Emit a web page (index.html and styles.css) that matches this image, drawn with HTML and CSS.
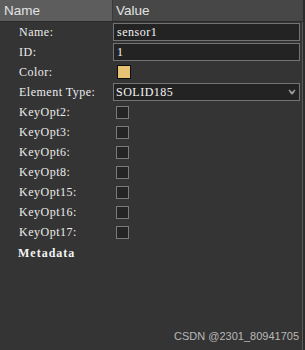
FILE: index.html
```html
<!DOCTYPE html>
<html>
<head>
<meta charset="utf-8">
<link rel="stylesheet" href="styles.css">
</head>
<body>
<div class="panel">
  <div class="header">
    <div class="hname">Name</div>
    <div class="hsep"></div>
    <div class="hvalue">Value</div>
  </div>
  <div class="rows">
    <div class="label">Name:</div>
    <div class="value"><div class="input">sensor1</div></div>
    <div class="label">ID:</div>
    <div class="value"><div class="input">1</div></div>
    <div class="label">Color:</div>
    <div class="value"><div class="swatch"></div></div>
    <div class="label">Element Type:</div>
    <div class="value"><div class="input select">SOLID185<svg class="chev" width="8" height="6" viewBox="0 0 8 6"><polyline points="1,1 4,4 7,1" fill="none" stroke="#9a9a9a" stroke-width="1.6"/><polyline points="2,3 4,5 6,3" fill="none" stroke="#9a9a9a" stroke-width="1.2"/></svg></div></div>
    <div class="label">KeyOpt2:</div>
    <div class="value"><div class="check"></div></div>
    <div class="label">KeyOpt3:</div>
    <div class="value"><div class="check"></div></div>
    <div class="label">KeyOpt6:</div>
    <div class="value"><div class="check"></div></div>
    <div class="label">KeyOpt8:</div>
    <div class="value"><div class="check"></div></div>
    <div class="label">KeyOpt15:</div>
    <div class="value"><div class="check"></div></div>
    <div class="label">KeyOpt16:</div>
    <div class="value"><div class="check"></div></div>
    <div class="label">KeyOpt17:</div>
    <div class="value"><div class="check"></div></div>
    <div class="section">Metadata</div>
  </div>
  <div class="watermark">CSDN @2301_80941705</div>
</div>
</body>
</html>
```
FILE: styles.css
```css
html, body {
  margin: 0;
  padding: 0;
  background: #343434;
}
.panel {
  position: relative;
  width: 305px;
  height: 350px;
  box-sizing: border-box;
  background: #343434;
  border-right: 2px solid #2c2c2c;
  box-shadow: inset -1px 0 0 #5a5a5a;
  overflow: hidden;
}
.header {
  display: grid;
  grid-template-columns: 112px 1px 1fr;
  height: 20px;
  border-bottom: 2px solid #2a2a2a;
  font-family: "Liberation Sans", Arial, sans-serif;
  font-size: 13.5px;
  color: #e2e2e2;
  line-height: 21px;
}
.hname {
  background: #5d5d5d;
  padding-left: 4px;
}
.hsep {
  background: #3a3a3a;
}
.hvalue {
  background: #474747;
  padding-left: 3px;
}
.rows {
  display: grid;
  grid-template-columns: 113px 187px;
  grid-auto-rows: 20px;
  font-family: "Liberation Serif", "Times New Roman", serif;
  font-size: 12px;
  letter-spacing: 0.5px;
  color: #ececec;
}
.label {
  padding-left: 19px;
  display: flex;
  align-items: center;
  white-space: nowrap;
}
.value {
  display: flex;
  align-items: center;
}
.input {
  box-sizing: border-box;
  width: 187px;
  height: 18px;
  background: #232323;
  border: 1px solid #737373;
  padding-left: 3px;
  display: flex;
  align-items: center;
  color: #f4f4f4;
}
.select {
  justify-content: space-between;
  padding-left: 2px;
  padding-right: 3px;
}
.chev {
  display: block;
}
.swatch {
  box-sizing: border-box;
  width: 14px;
  height: 14px;
  margin-left: 4px;
  background: #e5c373;
  border: 1px solid #0e0e0e;
}
.check {
  box-sizing: border-box;
  width: 13px;
  height: 13px;
  margin-left: 3px;
  margin-top: 1px;
  background: #252525;
  border: 1px solid #7a7a7a;
}
.section {
  grid-column: 1 / 3;
  padding-left: 18px;
  display: flex;
  align-items: center;
  padding-top: 2px;
  font-weight: bold;
  letter-spacing: 1px;
  font-size: 12px;
  color: #f4f4f4;
}
.watermark {
  position: absolute;
  right: 4px;
  bottom: 8px;
  font-family: "Liberation Sans", Arial, sans-serif;
  font-size: 11px;
  color: #b8b8b8;
}
```
